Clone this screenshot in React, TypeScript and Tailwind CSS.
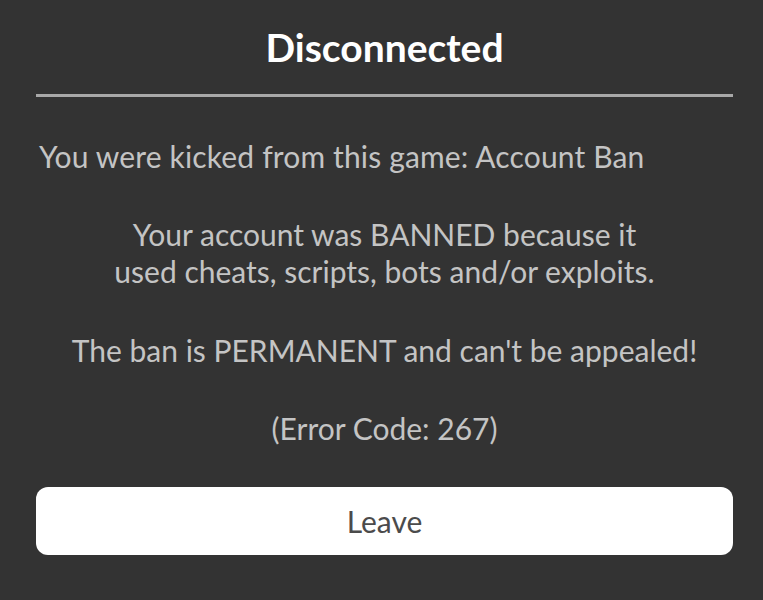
export default function App() {
  return (
    <div
      className="w-[763px] h-[600px] bg-[#333333] pl-[36px] pr-[30px] flex flex-col"
      style={{ fontFamily: "Lato, 'Noto Sans', sans-serif" }}
    >
      <div className="h-[94px] flex items-center justify-center">
        <h1 className="text-[39px] font-bold text-white leading-none">Disconnected</h1>
      </div>
      <div className="h-[3px] bg-[#a8a8a8]" />
      <p className="mt-[41px] pl-[3px] text-[30px] leading-[37px] tracking-[0.15px] text-[#c4c4c4]">
        You were kicked from this game: Account Ban
      </p>
      <div className="mt-[41px] text-center text-[30px] leading-[37px] text-[#c4c4c4]">
        <p>
          Your account was BANNED because it
          <br />
          used cheats, scripts, bots and/or exploits.
        </p>
        <p className="mt-[42px]">The ban is PERMANENT and can't be appealed!</p>
        <p className="mt-[41px]">(Error Code: 267)</p>
      </div>
      <button className="mt-[40px] h-[68px] w-full rounded-[12px] bg-white text-[30px] text-[#4b4b4b]">
        Leave
      </button>
    </div>
  );
}
